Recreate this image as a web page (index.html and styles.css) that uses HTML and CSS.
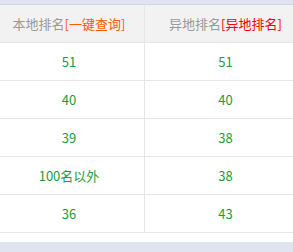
FILE: index.html
```html
<!DOCTYPE html>
<html>
<head>
<meta charset="utf-8">
<link rel="stylesheet" href="styles.css">
</head>
<body>
<div class="panel">
  <table class="rank">
    <thead>
      <tr>
        <th>本地排名<span class="q1">[一键查询]</span></th>
        <th>异地排名<span class="q2">[异地排名]</span></th>
      </tr>
    </thead>
    <tbody>
      <tr><td>51</td><td>51</td></tr>
      <tr><td>40</td><td>40</td></tr>
      <tr><td>39</td><td>38</td></tr>
      <tr><td>100名以外</td><td>38</td></tr>
      <tr><td>36</td><td>43</td></tr>
    </tbody>
  </table>
</div>
</body>
</html>
```
FILE: styles.css
```css
html, body {
  margin: 0;
  padding: 0;
  background: #e0e4ef;
  overflow: hidden;
}
body {
  width: 293px;
  height: 252px;
  font-family: "Noto Sans CJK SC", "Noto Sans", sans-serif;
  font-size: 13px;
}
.panel {
  margin-top: 4px;
  border-top: 1px solid #d0d6e6;
  background: #fff;
  height: 237px;
  overflow: hidden;
}
.rank {
  border-collapse: collapse;
  margin-left: -6px;
  width: 313px;
  table-layout: fixed;
}
.rank th, .rank td {
  text-align: center;
  border-right: 1px solid #e6e6e6;
  border-bottom: 1px solid #e6e6e6;
  padding: 0;
}
.rank th:first-child, .rank td:first-child {
  width: 150px;
}
.rank th {
  height: 37px;
  background: #f2f2f2;
  color: #999;
  font-weight: normal;
}
.rank td {
  height: 37px;
  color: #1f9a3c;
}
.q1 { color: #ff5a00; }
.q2 { color: #ff0000; }
```
